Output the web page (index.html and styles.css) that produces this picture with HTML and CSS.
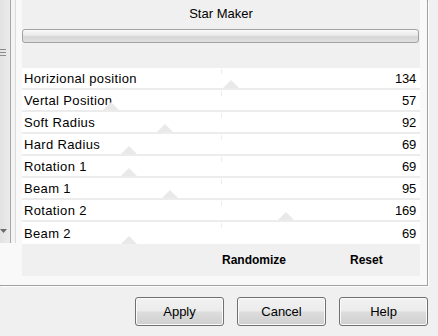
FILE: index.html
```html
<!DOCTYPE html>
<html lang="en">
<head>
  <meta charset="UTF-8">
  <title>Star Maker</title>
  <link rel="stylesheet" href="styles.css">
</head>
<body>
  <div class="frame">
    <div class="list">
      <div class="scrollbar">
        <svg class="grip" width="7" height="8" viewBox="0 0 7 8">
          <path d="M0 1.5H6M0 4.5H6M0 7.5H6" stroke="#8c8c8c" stroke-width="1"/>
        </svg>
        <svg class="arrow" width="8" height="5" viewBox="0 0 8 5">
          <path d="M0 0H7L3.5 4Z" fill="#6a6a6a"/>
        </svg>
      </div>
    </div>

    <div class="panel">
      <div class="head">
        <div class="title">Star Maker</div>
        <div class="bar"></div>
      </div>

      <div class="rows">
        <div class="row"><span class="name">Horizional position</span><span class="val">134</span><i class="tick"></i><i class="thumb" style="left: 201px"></i></div>
        <div class="row"><span class="name">Vertal Position</span><span class="val">57</span><i class="tick"></i><i class="thumb" style="left: 81px"></i></div>
        <div class="row"><span class="name">Soft Radius</span><span class="val">92</span><i class="tick"></i><i class="thumb" style="left: 135px"></i></div>
        <div class="row"><span class="name">Hard Radius</span><span class="val">69</span><i class="tick"></i><i class="thumb" style="left: 99px"></i></div>
        <div class="row"><span class="name">Rotation 1</span><span class="val">69</span><i class="tick"></i><i class="thumb" style="left: 99px"></i></div>
        <div class="row"><span class="name">Beam 1</span><span class="val">95</span><i class="tick"></i><i class="thumb" style="left: 140px"></i></div>
        <div class="row"><span class="name">Rotation 2</span><span class="val">169</span><i class="tick"></i><i class="thumb" style="left: 256px"></i></div>
        <div class="row"><span class="name">Beam 2</span><span class="val">69</span><i class="tick"></i><i class="thumb" style="left: 99px"></i></div>
      </div>

      <div class="actions">
        <button class="flat">Randomize</button>
        <button class="flat">Reset</button>
      </div>
    </div>
  </div>

  <div class="buttons">
    <button class="btn">Apply</button>
    <button class="btn">Cancel</button>
    <button class="btn">Help</button>
  </div>
</body>
</html>
```

FILE: styles.css
```css
body {
  margin: 0;
  background: #f0f0f0;
  font-family: "Liberation Sans", Arial, sans-serif;
  font-size: 13px;
  color: #000;
  width: 438px;
  height: 336px;
  overflow: hidden;
}
.frame {
  display: flex;
  width: 420px;
  height: 285px;
  padding: 0 7px 0 0;
  background: #f9f9f9;
  border-right: 1px solid #a0a0a0;
  border-bottom: 1px solid #a0a0a0;
  box-shadow: 1px 1px 0 #fff;
}
.list {
  width: 16px;
  height: 243px;
  margin-right: 6px;
  background: #f4f4f4;
  border-right: 1px solid #dcdcdc;
  box-sizing: border-box;
}
.scrollbar {
  position: relative;
  width: 10px;
  height: 100%;
  background: linear-gradient(90deg, #e2e2e2, #ebebeb);
  border-right: 1px solid #a6a6a6;
}
.grip {
  position: absolute;
  left: 0;
  top: 48px;
}
.arrow {
  position: absolute;
  left: 0;
  top: 229px;
}
.panel {
  width: 398px;
  height: 276px;
  background: #f0f0f0;
  display: flex;
  flex-direction: column;
}
.head {
  height: 68px;
  padding-top: 6px;
  box-sizing: border-box;
}
.title {
  text-align: center;
  line-height: 16px;
  height: 23px;
}
.bar {
  height: 12px;
  margin-right: 1px;
  border: 1px solid #a3a3a3;
  border-radius: 3px;
  background: linear-gradient(#fafafa 0%, #e8e8e8 45%, #d6d6d6 55%, #e0e0e0 100%);
}
.rows {
  background: #fff;
}
.row {
  position: relative;
  display: flex;
  justify-content: space-between;
  align-items: center;
  height: 20px;
  padding: 0 4px 0 2px;
  border-bottom: 2px solid #ececec;
}
.row:last-child {
  border-bottom: none;
  height: 22px;
}
.name {
  letter-spacing: 0.35px;
}
.val {
  letter-spacing: -0.2px;
}
.tick {
  position: absolute;
  left: 199px;
  top: 1px;
  width: 1px;
  height: 5px;
  background: #ededed;
}
.thumb {
  position: absolute;
  bottom: 0;
  width: 0;
  height: 0;
  border-left: 8px solid transparent;
  border-right: 8px solid transparent;
  border-bottom: 8px solid #e9e9e9;
}
.actions {
  flex: 1;
  display: flex;
  align-items: center;
  padding-left: 200px;
  gap: 64px;
}
.flat {
  border: none;
  background: none;
  padding: 0;
  font-family: "Liberation Sans", Arial, sans-serif;
  font-size: 12px;
  font-weight: bold;
  color: #000;
}
.buttons {
  display: flex;
  justify-content: flex-end;
  gap: 13px;
  padding: 11px 10px 0 0;
}
.btn {
  width: 89px;
  height: 29px;
  border: 1px solid #707070;
  border-radius: 3px;
  box-shadow: inset 0 0 0 1px #fbfbfb;
  background: linear-gradient(#f2f2f2 0%, #ebebeb 48%, #dddddd 52%, #cfcfcf 100%);
  font-family: "Liberation Sans", Arial, sans-serif;
  font-size: 13px;
  color: #000;
  padding: 0;
}
```
